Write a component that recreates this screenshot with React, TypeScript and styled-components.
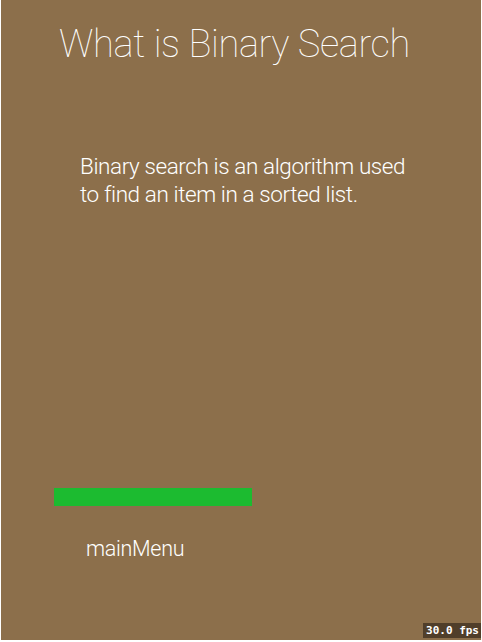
import React from "react";
import styled, { createGlobalStyle } from "styled-components";

const Global = createGlobalStyle`
  html, body { margin: 0; padding: 0; background: #ffffff; }
  body { width: 482px; height: 642px; overflow: hidden; }
`;

const Frame = styled.div`
  position: relative;
  box-sizing: border-box;
  width: 480px;
  height: 640px;
  margin-left: 1px;
  background: #8c6f4b;
  display: flex;
  flex-direction: column;
  font-family: Roboto, "Liberation Sans", sans-serif;
  color: #ffffff;
`;

const Title = styled.h1`
  margin: 21px 0 0 58px;
  font-size: 38px;
  font-weight: 100;
  line-height: 46px;
  letter-spacing: -0.35px;
  white-space: nowrap;
`;

const Body = styled.p`
  margin: 85px 0 0 79px;
  font-size: 22.5px;
  font-weight: 300;
  line-height: 28px;
  letter-spacing: -0.4px;
  width: 340px;
`;

const Spacer = styled.div`
  flex: 1;
`;

const Bar = styled.div<{ $width: number }>`
  margin-left: 53px;
  width: ${(p) => p.$width}px;
  height: 18px;
  background: #1cbb30;
`;

const MenuLabel = styled.div`
  margin: 30px 0 78px 85px;
  font-size: 21.5px;
  font-weight: 300;
  line-height: 26px;
  letter-spacing: -0.3px;
`;

const Fps = styled.div`
  position: absolute;
  right: 0;
  bottom: 2px;
  padding: 1px 2px 0 3px;
  background: rgba(40, 30, 20, 0.6);
  font-family: "DejaVu Sans Mono", "Liberation Mono", monospace;
  font-weight: bold;
  font-size: 11px;
  line-height: 14px;
  color: #ffffff;
`;

export default function App() {
  return (
    <>
      <Global />
      <Frame>
        <Title>What is Binary Search</Title>
        <Body>Binary search is an algorithm used to find an item in a sorted list.</Body>
        <Spacer />
        <Bar $width={198} />
        <MenuLabel>mainMenu</MenuLabel>
        <Fps>30.0 fps</Fps>
      </Frame>
    </>
  );
}
